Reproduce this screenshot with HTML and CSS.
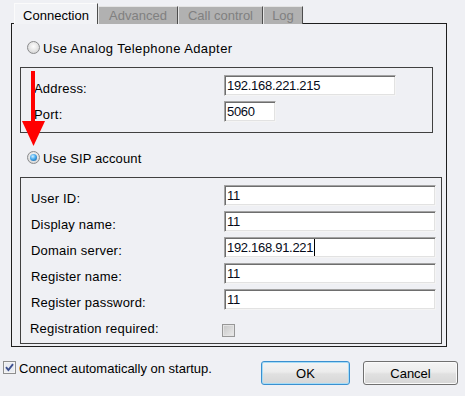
FILE: index.html
```html
<!DOCTYPE html>
<html lang="en">
<head>
    <meta charset="UTF-8">
    <meta name="viewport" content="width=device-width, initial-scale=1.0">
    <title>Connection settings</title>
    <link rel="stylesheet" href="styles.css">
</head>
<body>
    <div class="tabs">
        <div class="tab active" style="width: 84px;">Connection</div>
        <div class="tab" style="width: 80px;">Advanced</div>
        <div class="tab" style="width: 85px;">Call control</div>
        <div class="tab" style="width: 40px;">Log</div>
    </div>

    <div class="panel">
        <div class="choice choice-ata">
            <span class="radio"></span>
            <span>Use Analog Telephone Adapter</span>
        </div>

        <div class="group group-ata">
            <div class="row">
                <div class="label">Address:</div>
                <div class="field w-address">192.168.221.215</div>
            </div>
            <div class="row">
                <div class="label">Port:</div>
                <div class="field w-port">5060</div>
            </div>
        </div>

        <div class="choice choice-sip">
            <span class="radio checked"></span>
            <span>Use SIP account</span>
        </div>

        <div class="group group-sip">
            <div class="row">
                <div class="label">User ID:</div>
                <div class="field w-wide">11</div>
            </div>
            <div class="row">
                <div class="label">Display name:</div>
                <div class="field w-wide">11</div>
            </div>
            <div class="row">
                <div class="label">Domain server:</div>
                <div class="field w-wide">192.168.91.221<span class="caret"></span></div>
            </div>
            <div class="row">
                <div class="label">Register name:</div>
                <div class="field w-wide">11</div>
            </div>
            <div class="row">
                <div class="label">Register password:</div>
                <div class="field w-wide">11</div>
            </div>
            <div class="row row-check">
                <div class="label">Registration required:</div>
                <span class="checkbox disabled"></span>
            </div>
        </div>

        <!-- red pointer drawn over the dialog -->
        <svg class="arrow" width="26" height="77" viewBox="0 0 26 77">
            <rect x="10" y="1" width="4" height="51" fill="#f00"/>
            <polygon points="1,51 24,51 12.5,76" fill="#f00"/>
        </svg>
    </div>

    <div class="footer">
        <svg class="checkbox-on" width="13" height="13" viewBox="0 0 13 13">
            <rect x="0.5" y="0.5" width="12" height="12" fill="#f4f4f4" stroke="#8e8f8f"/>
            <rect x="2" y="2" width="9" height="9" fill="#e9ecf2"/>
            <path d="M3 6.2 L5.4 9 L10 3.2" fill="none" stroke="#3c4f8e" stroke-width="1.9"/>
        </svg>
        <span class="footer-label">Connect automatically on startup.</span>
        <div class="buttons">
            <button class="btn btn-default">OK</button>
            <button class="btn btn-cancel">Cancel</button>
        </div>
    </div>
</body>
</html>
```

FILE: styles.css
```css
* {
    margin: 0;
    padding: 0;
    box-sizing: border-box;
}

body {
    font-family: "Liberation Sans", Arial, sans-serif;
    font-size: 13px;
    color: #000;
    background: #eff0f4;
    width: 465px;
    height: 396px;
    overflow: hidden;
}

/* tab strip */
.tabs {
    display: flex;
    align-items: flex-end;
    height: 24px;
    padding-left: 14px;
    position: relative;
    z-index: 1;
}

.tab {
    height: 18px;
    padding-top: 1px;
    line-height: 16px;
    text-align: center;
    white-space: nowrap;
    background: #b1b1b1;
    color: #808080;
    border-top: 1px solid #e4e4e4;
    border-left: 1px solid #e4e4e4;
    border-right: 1px solid #4d4d4d;
}

.tab.active {
    height: 21px;
    padding-top: 4px;
    background: #f2f3f6;
    color: #000;
    border-top-color: #fbfbfb;
    border-left-color: #fbfbfb;
}

/* main panel */
.panel {
    position: relative;
    width: 436px;
    height: 324px;
    margin: -1px 0 0 11px;
    padding: 17px 0 2px 0;
    border: 1px solid #1e1e1e;
}

.choice {
    display: flex;
    align-items: flex-start;
    margin-left: 15px;
    line-height: 16px;
    height: 16px;
    white-space: nowrap;
}

.choice-ata {
    letter-spacing: 0.4px;
}

.choice-sip {
    margin-top: 18px;
    letter-spacing: 0.12px;
}

.radio {
    flex: none;
    width: 13px;
    height: 13px;
    margin-right: 3px;
    border-radius: 50%;
    border: 1px solid #8a8b8c;
    background: radial-gradient(circle at 50% 40%, #fdfdfd 0, #e6e6e6 50%, #c8c8c8 100%);
    display: flex;
    align-items: center;
    justify-content: center;
}

.radio.checked::after {
    content: "";
    width: 7px;
    height: 7px;
    border-radius: 50%;
    background: radial-gradient(circle at 40% 35%, #d2f1ff 0, #45aaee 45%, #12508e 100%);
}

.group {
    margin-left: 8px;
    border: 1px solid #404040;
}

.group-ata {
    width: 413px;
    height: 66px;
    margin-top: 10px;
    padding: 7px 0 10px 13px;
}

.group-sip {
    width: 422px;
    height: 167px;
    margin-top: 10px;
    padding: 7px 0 6px 10px;
}

.row {
    display: flex;
    align-items: flex-start;
    height: 21px;
}

.row + .row {
    margin-top: 5px;
}

.label {
    padding-top: 6px;
    line-height: 16px;
    white-space: nowrap;
    letter-spacing: 0.2px;
}

.group-ata .label {
    width: 190px;
}

.group-sip .label {
    width: 193px;
}

.group-sip .row-check {
    margin-top: 8px;
    margin-left: -1px;
    height: 19px;
}

.group-sip .row-check .label {
    width: 192px;
    padding-top: 3px;
}

.field {
    height: 21px;
    padding-left: 2px;
    line-height: 19px;
    white-space: nowrap;
    letter-spacing: -0.3px;
    background: #fff;
    color: #050a18;
    border: 1px solid;
    border-color: #a3a3a3 #f4f4f4 #f4f4f4 #a3a3a3;
    box-shadow: inset 1px 1px 0 #6e6e6e, inset -1px -1px 0 #e2e2e2;
}

.w-address {
    width: 172px;
}

.w-port {
    width: 52px;
}

.w-wide {
    width: 212px;
}

.caret {
    display: inline-block;
    width: 1px;
    height: 17px;
    margin-left: 1px;
    background: #000;
    vertical-align: -4px;
}

.checkbox {
    flex: none;
    width: 13px;
    height: 13px;
    margin-top: 6px;
    border: 1px solid #979797;
    box-shadow: inset 0 0 0 1px #e4e4e4;
    background: linear-gradient(135deg, #c6c6c6, #ebebeb);
}

.arrow {
    position: absolute;
    left: 9px;
    top: 46px;
}

/* bottom bar */
.footer {
    display: flex;
    align-items: flex-start;
    margin-top: 14px;
    padding: 0 7px 0 3px;
}

.checkbox-on {
    flex: none;
    display: block;
}

.footer-label {
    margin-left: 3px;
    line-height: 16px;
    white-space: nowrap;
}

.buttons {
    display: flex;
    gap: 13px;
    margin-left: auto;
}

.btn {
    height: 24px;
    font-family: inherit;
    font-size: 13px;
    color: #000;
    border: 1px solid #707070;
    border-radius: 3px;
    background: linear-gradient(#f4f4f4, #ececec 45%, #e0e0e0 55%, #d7d7d7);
    box-shadow: inset 0 0 0 1px #fafafa;
}

.btn-default {
    width: 89px;
    border-color: #3a90d0;
    box-shadow: inset 0 0 0 1px #a6dcf6;
}

.btn-cancel {
    width: 95px;
}
```
